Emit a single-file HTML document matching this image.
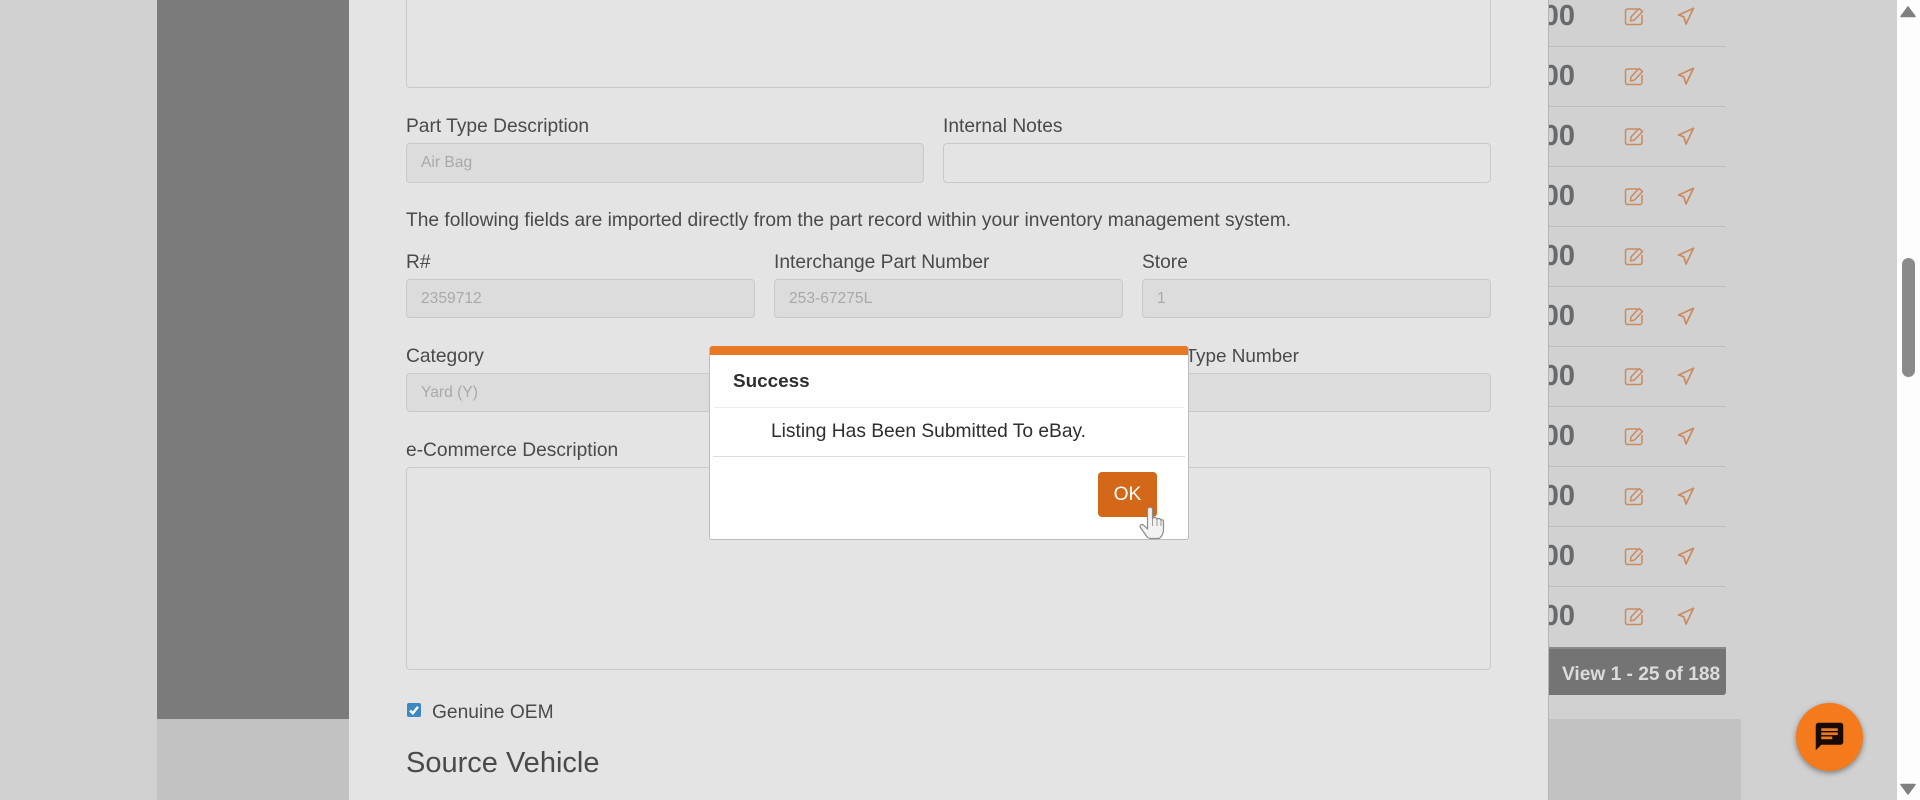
<!DOCTYPE html>
<html lang="en"><head><meta charset="utf-8"><title>Listing submitted</title>
<style>
html,body{margin:0;padding:0;width:1920px;height:800px;overflow:hidden;background:#d1d1d1;font-family:"Liberation Sans",Arial,sans-serif;}
.a{position:absolute;}
.t{position:absolute;white-space:nowrap;color:#4a4a4a;font-size:19.2px;line-height:24px;height:24px;}
.i{position:absolute;box-sizing:border-box;border:1px solid #c9c9c9;border-radius:4px;background:#e4e4e4;}
.d{background:#dcdcdc;color:#a9a9a9;font-size:15.6px;line-height:38px;padding-left:14px;}
.n{position:absolute;left:1510px;width:65px;text-align:right;font-weight:bold;font-size:29px;line-height:30px;height:30px;color:#676a6d;white-space:nowrap;}
.l{position:absolute;left:1548px;width:178px;height:1px;background:#bcbcbc;}
</style></head>
<body>
<div class="a" style="left:157px;top:0;width:192px;height:719px;background:#7b7b7b"></div>
<div class="a" style="left:157px;top:719px;width:1584px;height:81px;background:#c2c2c2"></div>
<!-- table digits -->
<div class="n" style="top:1px">00</div><div class="n" style="top:61px">00</div><div class="n" style="top:121px">00</div><div class="n" style="top:181px">00</div><div class="n" style="top:241px">00</div><div class="n" style="top:301px">00</div><div class="n" style="top:361px">00</div><div class="n" style="top:421px">00</div><div class="n" style="top:481px">00</div><div class="n" style="top:541px">00</div><div class="n" style="top:601px">00</div>
<div class="l" style="top:46px"></div><div class="l" style="top:106px"></div><div class="l" style="top:166px"></div><div class="l" style="top:226px"></div><div class="l" style="top:286px"></div><div class="l" style="top:346px"></div><div class="l" style="top:406px"></div><div class="l" style="top:466px"></div><div class="l" style="top:526px"></div><div class="l" style="top:586px"></div>
<svg class="a" style="left:1620px;top:0" width="80" height="640" viewBox="0 0 80 640" fill="none" stroke="#c98b60" stroke-width="1.5" stroke-linejoin="round" stroke-linecap="round">
<defs><g id="r">
<path d="M17 9H7.500a2 2 0 0 0-2 2v11.500a2 2 0 0 0 2 2H20a2 2 0 0 0 2-2V15.500"/>
<path d="M10.500 21 11 17 19 8.500 22.500 11.500 14.500 20z"/>
<path d="M73.500 8.300 58.500 15 63.800 16.800 66 24z" stroke-width="1.700"/>
</g></defs>
<use href="#r"/><use href="#r" y="60"/><use href="#r" y="120"/><use href="#r" y="180"/><use href="#r" y="240"/><use href="#r" y="300"/><use href="#r" y="360"/><use href="#r" y="420"/><use href="#r" y="480"/><use href="#r" y="540"/><use href="#r" y="600"/>
</svg>
<div class="a" style="left:1548px;top:647px;width:178px;height:48px;background:#747474;border-radius:0 0 3px 0;border-top:2px solid #8a8a8a;box-sizing:border-box"></div>
<div class="t" style="left:1562px;top:663px;font-weight:bold;font-size:19.150px;color:#dcdcdc">View 1 - 25 of 188</div>

<!-- panel -->
<div class="a" style="left:349px;top:0;width:1200px;height:800px;background:#e4e4e4;border-right:1px solid #b5b5b5;box-sizing:border-box"></div>
<div class="i" style="left:406px;top:-20px;width:1085px;height:108px"></div>
<div class="t" style="left:406px;top:114.500px">Part Type Description</div>
<div class="t" style="left:943px;top:114.500px">Internal Notes</div>
<div class="i d" style="left:406px;top:143px;width:518px;height:40px;">Air Bag</div>
<div class="i" style="left:943px;top:143px;width:548px;height:40px"></div>
<div class="t" style="left:406px;top:208.500px">The following fields are imported directly from the part record within your inventory management system.</div>
<div class="t" style="left:406px;top:250.500px">R#</div>
<div class="t" style="left:774px;top:250.500px">Interchange Part Number</div>
<div class="t" style="left:1142px;top:250.500px">Store</div>
<div class="i d" style="left:406px;top:279px;width:349px;height:39px">2359712</div>
<div class="i d" style="left:774px;top:279px;width:349px;height:39px">253-67275L</div>
<div class="i d" style="left:1142px;top:279px;width:349px;height:39px">1</div>
<div class="t" style="left:406px;top:344.500px">Category</div>
<div class="t" style="left:1146px;top:344.500px;font-size:18.900px">Part Type Number</div>
<div class="i d" style="left:406px;top:373px;width:349px;height:39px">Yard (Y)</div>
<div class="i d" style="left:1142px;top:373px;width:349px;height:39px"></div>
<div class="t" style="left:406px;top:438.500px">e-Commerce Description</div>
<div class="i" style="left:406px;top:467px;width:1085px;height:203px"></div>
<svg class="a" style="left:407px;top:703px" width="14" height="14" viewBox="0 0 14 14"><rect width="14" height="14" rx="2" fill="#3b88c3"/><path d="M3 7.500 5.800 10.300 11 3.800" fill="none" stroke="#fff" stroke-width="2.400"/></svg>
<div class="t" style="left:432px;top:700.500px">Genuine OEM</div>
<div class="t" style="left:406px;top:746px;font-size:29px;line-height:34px;height:34px">Source Vehicle</div>

<!-- modal -->
<div class="a" style="left:709px;top:346px;width:480px;height:194px;box-sizing:border-box;background:#fff;border:1px solid #bdbdbd;border-top:0;border-radius:3px;overflow:hidden">
  <div class="a" style="left:-1px;top:0;width:482px;height:9px;background:#e97825"></div>
  <div class="a" style="left:4px;top:61px;width:470px;height:1px;background:#ececec"></div>
  <div class="a" style="left:3px;top:110px;width:472px;height:1px;background:#dedede"></div>
</div>
<div class="t" style="left:733px;top:370px;font-weight:bold;font-size:18.900px;color:#2e2e2e">Success</div>
<div class="t" style="left:771px;top:419.500px;color:#2e2e2e">Listing Has Been Submitted To eBay.</div>
<div class="a" style="left:1098px;top:472px;width:59px;height:45px;background:#d26818;border-radius:4px;color:#fff;font-size:19.200px;line-height:45px;text-align:center">OK</div>
<svg class="a" style="left:1139px;top:506px" width="28" height="34" viewBox="0 0 28 34"><path d="M8.500 3.500c0-3 5-3 5 0V13c.5-2 4-2 4.500.5.5-1.500 3.500-1.500 4 .8.500-1 2.500-.7 2.500 1.200V23c0 5-2.500 9-5 9.500H12c-3 0-4-1.500-5-3L1.500 21.500c-1.500-2.500 1.500-4 3.500-2L8.500 23z" fill="#f4f2f0" stroke="#8b8b8b" stroke-width="1.200" stroke-linejoin="round"/><path d="M13.500 13v7M18 13.500V20M22 14.500V20" stroke="#9a9a9a" stroke-width="1" fill="none"/></svg>

<!-- scrollbar -->
<div class="a" style="left:1897px;top:0;width:23px;height:800px;background:#fdfdfd"></div>
<div class="a" style="left:1902px;top:258px;width:13px;height:119px;background:#8a8a8a;border-radius:7px"></div>
<svg class="a" style="left:1900px;top:5px" width="16" height="13" viewBox="0 0 16 13"><path d="M8 2 15 11.500H1z" fill="#808080" stroke="#808080" stroke-width="1.500" stroke-linejoin="round"/></svg>
<svg class="a" style="left:1900px;top:783px" width="16" height="13" viewBox="0 0 16 13"><path d="M1 1.500H15L8 11z" fill="#808080" stroke="#808080" stroke-width="1.500" stroke-linejoin="round"/></svg>

<!-- chat fab -->
<div class="a" style="left:1796px;top:703px;width:67px;height:68px;border-radius:50%;background:#f47a1b;box-shadow:0 2px 6px rgba(0,0,0,.4)"></div>
<svg class="a" style="left:1813px;top:720px" width="33" height="33" viewBox="0 0 24 24"><path d="M20 2H4c-1.100 0-1.990.9-1.990 2L2 22l4-4h14c1.100 0 2-.9 2-2V4c0-1.100-.9-2-2-2z" fill="#1a0b02"/><path d="M6 6h12v2H6zM6 9h12v2H6zM6 12h8v2H6z" fill="#e97a25"/></svg>
</body></html>
